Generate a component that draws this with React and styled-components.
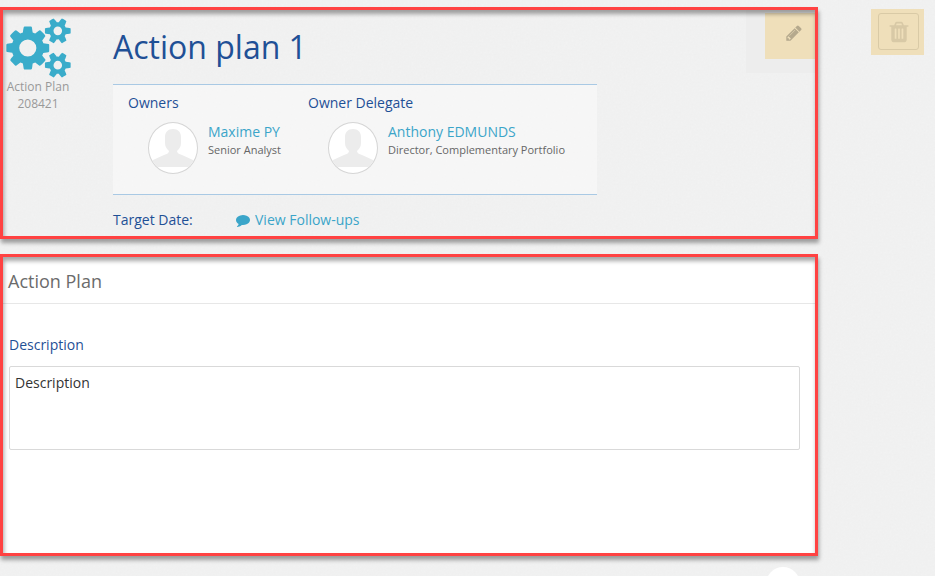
import React from 'react'
import styled, { createGlobalStyle } from 'styled-components'

const GlobalStyle = createGlobalStyle`
    * {
        box-sizing: border-box;
    }

    body {
        margin: 0;
        font-family: 'Open Sans', 'Noto Sans', sans-serif;
        font-size: 14px;
        line-height: 20px;
        color: #333;
        background-color: #f3f3f3;
        background-image: url("data:image/svg+xml,%3Csvg xmlns='http://www.w3.org/2000/svg' width='200' height='200'%3E%3Cfilter id='n' x='0' y='0' width='100%25' height='100%25'%3E%3CfeTurbulence type='fractalNoise' baseFrequency='.5' numOctaves='3' stitchTiles='stitch'/%3E%3CfeColorMatrix values='0 0 0 0 .4 0 0 0 0 .42 0 0 0 0 .42 1 0 0 0 0'/%3E%3C/filter%3E%3Crect width='200' height='200' filter='url(%23n)' opacity='.07'/%3E%3C/svg%3E");
    }
`;

const CogsIcon = () => (
    <svg width='65' height='60' viewBox='0 0 1920 1792' fill='currentColor' aria-hidden='true'>
        <path d='M896 896q0-106-75-181t-181-75-181 75-75 181 75 181 181 75 181-75 75-181zm768 512q0-52-38-90t-90-38-90 38-38 90q0 53 37.5 90.5t90.5 37.5 90.5-37.5 37.5-90.5zm0-1024q0-52-38-90t-90-38-90 38-38 90q0 53 37.5 90.5t90.5 37.5 90.5-37.5 37.5-90.5zm-384 421v185q0 10-7 19.5t-16 10.5l-155 24q-11 35-32 76 34 48 90 115 7 11 7 20 0 12-7 19-23 30-82.5 89.5t-78.5 59.5q-11 0-21-7l-115-90q-37 19-77 31-11 108-23 155-7 24-30 24h-186q-11 0-20-7.5t-10-17.5l-23-153q-34-10-75-31l-118 89q-7 7-20 7-11 0-21-8-144-133-144-160 0-9 7-19 10-14 41-53t47-61q-23-44-35-82l-152-24q-10-1-17-9.5t-7-19.5v-185q0-10 7-19.5t16-10.5l155-24q11-35 32-76-34-48-90-115-7-11-7-20 0-12 7-20 22-30 82-89t79-59q11 0 21 7l115 90q34-18 77-32 11-108 23-154 7-24 30-24h186q11 0 20 7.5t10 17.5l23 153q34 10 75 31l118-89q8-7 20-7 11 0 21 8 144 133 144 160 0 8-7 19-12 16-42 54t-45 60q23 48 34 82l152 23q10 2 17 10.5t7 19.5zm640 533v140q0 16-149 31-12 27-30 52 51 113 51 138 0 4-4 7-122 71-124 71-8 0-46-47t-52-68q-20 2-30 2t-30-2q-14 21-52 68t-46 47q-2 0-124-71-4-3-4-7 0-25 51-138-18-25-30-52-149-15-149-31v-140q0-16 149-31 13-29 30-52-51-113-51-138 0-4 4-7 4-2 35-20t59-34 30-16q8 0 46 46.5t52 67.5q20-2 30-2t30 2q51-71 92-112l6-2q4 0 124 70 4 3 4 7 0 25-51 138 17 23 30 52 149 15 149 31zm0-1024v140q0 16-149 31-12 27-30 52 51 113 51 138 0 4-4 7-122 71-124 71-8 0-46-47t-52-68q-20 2-30 2t-30-2q-14 21-52 68t-46 47q-2 0-124-71-4-3-4-7 0-25 51-138-18-25-30-52-149-15-149-31v-140q0-16 149-31 13-29 30-52-51-113-51-138 0-4 4-7 4-2 35-20t59-34 30-16q8 0 46 46.5t52 67.5q20-2 30-2t30 2q51-71 92-112l6-2q4 0 124 70 4 3 4 7 0 25-51 138 17 23 30 52 149 15 149 31z' />
    </svg>
)

const CommentIcon = () => (
    <svg width='14' height='14' viewBox='0 0 1792 1792' fill='currentColor' aria-hidden='true'>
        <path d='M1792 896q0 174-120 321.5t-326 233-450 85.5q-70 0-145-8-198 175-460 242-49 14-114 22-17 2-30.5-9t-17.5-29v-1q-3-4-.5-12t2-10 4.5-9.5l6-9 7-8.5 8-9q7-8 31-34.5t34.5-38 31-39.5 32.5-51 27-59 26-76q-157-89-247.5-220t-90.5-281q0-130 71-248.5t191-204.5 286-136.5 348-50.5q244 0 450 85.5t326 233 120 321.5z' />
    </svg>
)

const PencilIcon = () => (
    <svg width='18' height='18' viewBox='0 0 1792 1792' fill='currentColor' aria-hidden='true'>
        <path d='M491 1536l91-91-235-235-91 91v107h128v128h107zm523-928q0-22-22-22-10 0-17 7l-542 542q-7 7-7 17 0 22 22 22 10 0 17-7l542-542q7-7 7-17zm-54-192l416 416-832 832h-416v-416zm683 96q0 53-37 90l-166 166-416-416 166-165q36-38 90-38 53 0 91 38l235 234q37 39 37 91z' />
    </svg>
)

const TrashIcon = () => (
    <svg width='24' height='24' viewBox='0 0 1792 1792' fill='currentColor' aria-hidden='true'>
        <path d='M704 1376v-704q0-14-9-23t-23-9h-64q-14 0-23 9t-9 23v704q0 14 9 23t23 9h64q14 0 23-9t9-23zm256 0v-704q0-14-9-23t-23-9h-64q-14 0-23 9t-9 23v704q0 14 9 23t23 9h64q14 0 23-9t9-23zm256 0v-704q0-14-9-23t-23-9h-64q-14 0-23 9t-9 23v704q0 14 9 23t23 9h64q14 0 23-9t9-23zm-544-992h448l-48-117q-7-9-17-11h-317q-10 2-17 11zm928 32v64q0 14-9 23t-23 9h-96v948q0 83-47 143.5t-113 60.5h-832q-66 0-113-58.5t-47-141.5v-952h-96q-14 0-23-9t-9-23v-64q0-14 9-23t23-9h309l70-167q15-37 54-63t79-26h320q40 0 79 26t54 63l70 167h309q14 0 23 9t9 23z' />
    </svg>
)

const Silhouette = () => (
    <svg width='48' height='50' viewBox='0 0 48 50' fill='#ececec' aria-hidden='true'>
        <path d='M16 14c0-5 3-8 8-8s8 3 8 8v6c0 4-2 6-4 8 0 2 2 3 5 4l11 5c2 1 3 2 4 4v3H0v-3c1-2 2-3 4-4l11-5c3-1 5-2 5-4-2-2-4-4-4-8z' />
    </svg>
)

const Person = ({ label, name, role }) => (
    <div>
        <Label as='h2'>{label}</Label>
        <PersonRow>
            <Avatar>
                <Silhouette />
            </Avatar>
            <div>
                <TextLink href='#'>{name}</TextLink>
                <Role>{role}</Role>
            </div>
        </PersonRow>
    </div>
)

const App = () => {
    return (
        <Page>
            <GlobalStyle />
            <Main>
                <Frame>
                    <Header>
                        <Kind>
                            <CogsIcon />
                            <div>Action Plan</div>
                            <div>208421</div>
                        </Kind>
                        <Summary>
                            <Title>Action plan 1</Title>
                            <Owners>
                                <Person label='Owners' name='Maxime PY' role='Senior Analyst' />
                                <Person label='Owner Delegate' name='Anthony EDMUNDS' role='Director, Complementary Portfolio' />
                            </Owners>
                            <Target>
                                <Label>Target Date:</Label>
                                <TextLink href='#'>
                                    <CommentIcon />
                                    View Follow-ups
                                </TextLink>
                            </Target>
                        </Summary>
                        <EditArea>
                            <EditButton aria-label='Edit'>
                                <PencilIcon />
                            </EditButton>
                        </EditArea>
                    </Header>
                </Frame>
                <Frame>
                    <Section>
                        <SectionTitle>Action Plan</SectionTitle>
                        <Field>
                            <Label as='label' htmlFor='description'>Description</Label>
                            <TextArea id='description' defaultValue='Description' />
                        </Field>
                    </Section>
                </Frame>
                <RoundButton aria-label='More' />
            </Main>
            <Aside>
                <DeleteArea>
                    <DeleteButton aria-label='Delete'>
                        <TrashIcon />
                    </DeleteButton>
                </DeleteArea>
            </Aside>
        </Page>
    )
}

export default App

const Page = styled.div`
    display: grid;
    grid-template-columns: minmax(0, 1fr) 117px;
    height: 100vh;
    overflow: hidden;
`;

const Main = styled.main`
    display: flex;
    flex-direction: column;
    gap: 15px;
    padding-top: 7px;
`;

const Frame = styled.section`
    position: relative;
    flex: none;
    border: 3px solid #ff4242;
    box-shadow: 1px 4px 4px rgba(0, 0, 0, 0.35);

    &::after {
        content: '';
        position: absolute;
        inset: 0;
        box-shadow: inset 1px 4px 4px rgba(0, 0, 0, 0.35);
        pointer-events: none;
    }
`;

const Header = styled.div`
    display: flex;
    min-height: 226px;
`;

const Kind = styled.div`
    display: flex;
    flex: none;
    flex-direction: column;
    align-items: center;
    width: 70px;
    padding-top: 8px;
    font-size: 12px;
    line-height: 17px;
    color: #999;

    svg {
        color: #3aacca;
    }
`;

const Summary = styled.div`
    flex: none;
    width: 484px;
    margin: 0 auto 0 40px;
`;

const Title = styled.h1`
    margin: 0;
    padding: 17px 0;
    font-size: 32px;
    font-weight: 400;
    line-height: 40px;
    color: #1f5096;
`;

const Owners = styled.div`
    display: grid;
    grid-template-columns: 180px 1fr;
    height: 111px;
    padding: 8px 15px;
    border: solid #a9c9e4;
    border-width: 1px 0;
    background: rgba(255, 255, 255, 0.4);
`;

const Label = styled.span`
    display: block;
    margin: 0;
    font-size: 14px;
    font-weight: 400;
    line-height: 20px;
    color: #1f5096;
`;

const PersonRow = styled.div`
    display: flex;
    gap: 10px;
    padding: 9px 0 0 20px;
`;

const Avatar = styled.div`
    flex: none;
    width: 50px;
    height: 52px;
    border: 1px solid #d5d5d5;
    border-radius: 50%;
    background: #fff;
    overflow: hidden;

    svg {
        display: block;
    }
`;

const TextLink = styled.a`
    display: flex;
    align-items: center;
    gap: 5px;
    color: #3ba5c9;
    text-decoration: none;
    white-space: nowrap;
`;

const Role = styled.div`
    font-size: 11px;
    line-height: 16px;
    color: #666;
    white-space: nowrap;
`;

const Target = styled.div`
    display: grid;
    grid-template-columns: 123px 1fr;
    padding-top: 15px;
`;

const EditArea = styled.div`
    flex: none;
    height: 63px;
    padding: 3px 0 0 19px;
    background: #ededed;
`;

const EditButton = styled.button`
    display: flex;
    align-items: center;
    justify-content: center;
    width: 50px;
    height: 46px;
    padding: 0 0 6px 8px;
    border: 0;
    background: #efdfba;
    color: #b5a98d;
`;

const Section = styled.div`
    min-height: 296px;
    background: #fff;
`;

const SectionTitle = styled.h2`
    margin: 0;
    padding: 12px 5px 9px;
    border-bottom: 1px solid #e7e7e7;
    font-size: 18px;
    font-weight: 400;
    line-height: 25px;
    color: #6b6b6b;
`;

const Field = styled.div`
    display: flex;
    flex-direction: column;
    gap: 11px;
    padding: 31px 15px 0 6px;
`;

const TextArea = styled.textarea`
    width: 100%;
    height: 84px;
    padding: 6px 5px;
    border: 1px solid #d9d9d9;
    border-radius: 2px;
    font: inherit;
    color: #333;
    background: #fff;
    resize: none;
    outline: none;
`;

const RoundButton = styled.button`
    align-self: flex-end;
    flex: none;
    width: 34px;
    height: 34px;
    margin: -4px 18px 0 0;
    padding: 0;
    border: 0;
    border-radius: 50%;
    background: #fff;
`;

const Aside = styled.aside`
    padding: 9px 11px;
`;

const DeleteArea = styled.div`
    width: 53px;
    height: 46px;
    margin-left: auto;
    padding: 4px 5px 5px 7px;
    background: #efdfba;
`;

const DeleteButton = styled.button`
    display: flex;
    align-items: center;
    justify-content: center;
    width: 100%;
    height: 100%;
    padding: 0;
    border: 1px solid #d9caa6;
    border-radius: 3px;
    background: transparent;
    color: #d8c9a6;
`;
